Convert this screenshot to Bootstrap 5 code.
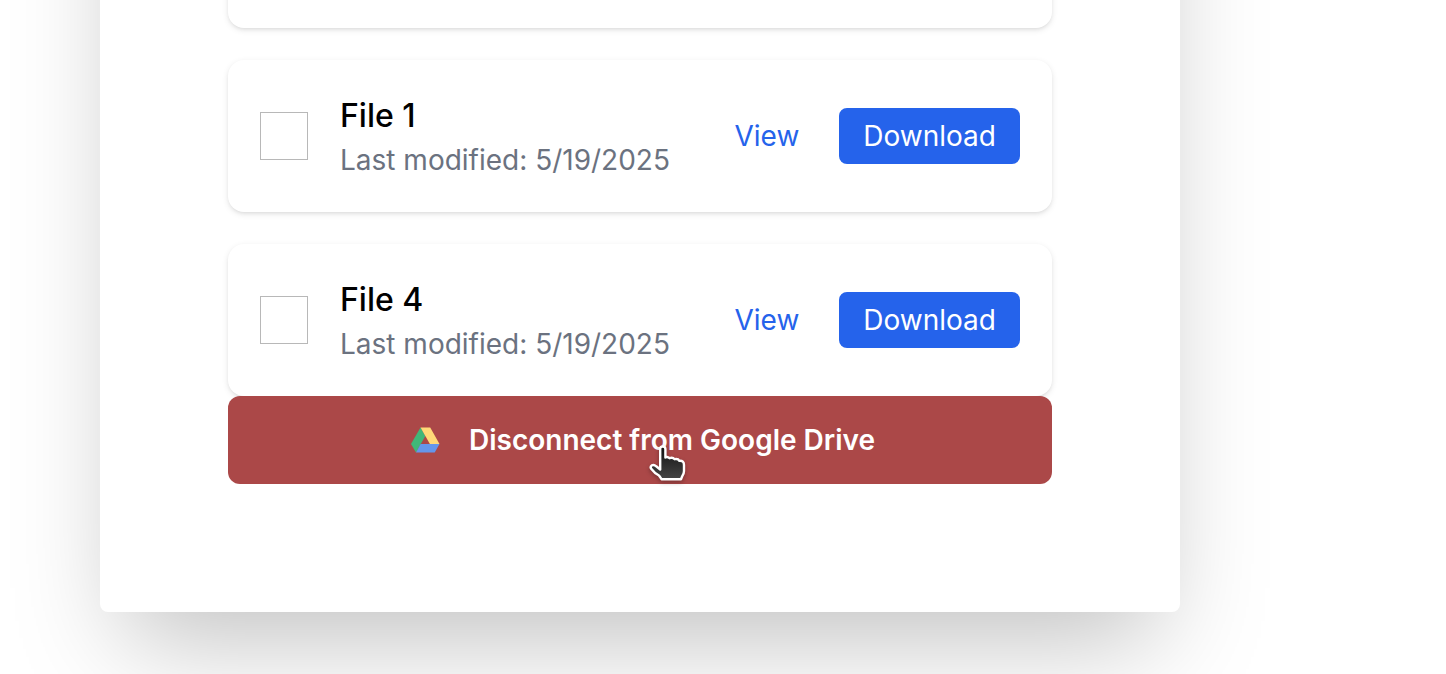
<!DOCTYPE html>
<html lang="en">
<head>
<meta charset="utf-8">
<meta name="viewport" content="width=device-width, initial-scale=1">
<title>Google Drive files</title>
<link href="https://cdn.jsdelivr.net/npm/bootstrap@5.3.0/dist/css/bootstrap.min.css" rel="stylesheet">
<style>
  body { font-family: Inter, "Liberation Sans", sans-serif; background: #fff; color: #000; }
  .page-wrap { padding: 0 100px 62px; }
  /* The panel starts above the viewport, as when scrolled to its end. */
  .panel { max-width: 1080px; margin-top: -252px; padding: 128px; background: #fff; border-radius: 8px; box-shadow: 0 50px 100px -24px rgba(0,0,0,.25); }
  .file-list { gap: 32px; }
  .file-card { min-height: 152px; padding: 32px; gap: 32px; background: #fff; border-radius: 16px; box-shadow: 0 2px 6px rgba(0,0,0,.1), 0 2px 4px -2px rgba(0,0,0,.1); }
  .file-check { appearance: none; width: 48px; height: 48px; border: 1px solid #b8b8b8; background: #fff; }
  .file-name { font-size: 32px; line-height: 48px; font-weight: 500; }
  .file-date { font-size: 28px; line-height: 40px; color: #6b7280; }
  .file-actions { gap: 16px; }
  .file-actions .btn { font-size: 28px; line-height: 40px; padding: 8px 24px; border: 0; border-radius: 8px; }
  .btn-view { color: #2563eb; }
  .btn-download, .btn-download:hover { color: #fff; background: #2563eb; }
  .btn-drive { height: 88px; gap: 24px; border: 0; border-radius: 12px; background: #ab4848; color: #fff; font-size: 28px; line-height: 40px; font-weight: 600; }
  .pointer { top: 48px; left: 50%; margin-left: 8px; filter: drop-shadow(0 2px 2px rgba(0,0,0,.3)); pointer-events: none; }
</style>
</head>
<body>
<div class="page-wrap">
  <main class="panel">
    <div class="file-list d-flex flex-column">
      <div class="file-card"></div>
      <div class="file-card d-flex align-items-center">
        <input class="file-check flex-shrink-0" type="checkbox" id="file1">
        <label class="flex-grow-1" for="file1">
          <span class="file-name d-block">File 1</span>
          <span class="file-date d-block">Last modified: 5/19/2025</span>
        </label>
        <div class="file-actions d-flex">
          <a class="btn btn-view" href="#">View</a>
          <button class="btn btn-download" type="button">Download</button>
        </div>
      </div>
      <div class="file-card d-flex align-items-center">
        <input class="file-check flex-shrink-0" type="checkbox" id="file4">
        <label class="flex-grow-1" for="file4">
          <span class="file-name d-block">File 4</span>
          <span class="file-date d-block">Last modified: 5/19/2025</span>
        </label>
        <div class="file-actions d-flex">
          <a class="btn btn-view" href="#">View</a>
          <button class="btn btn-download" type="button">Download</button>
        </div>
      </div>
    </div>
    <button class="btn-drive position-relative d-flex align-items-center justify-content-center w-100" type="button">
      <svg width="40" height="40" viewBox="0 0 40 40" aria-hidden="true">
        <path fill="#40b778" d="M15.5 7.5 6 24l5 8.500L20.300 16z"/>
        <path fill="#ffd978" d="M15.500 7.500h9.700L34.500 24h-9.600z"/>
        <path fill="#6496eb" d="M15.600 24h18.900l-4.800 8.500H11z"/>
      </svg>
      <span>Disconnect from Google Drive</span>
      <svg class="pointer position-absolute" width="40" height="40" viewBox="0 0 40 40" aria-hidden="true">
        <defs><linearGradient id="hand" x1="0" y1="0" x2="0" y2="1"><stop offset="0" stop-color="#111"/><stop offset="1" stop-color="#454545"/></linearGradient></defs>
        <path fill="url(#hand)" stroke="#fff" stroke-width="2.400" stroke-linejoin="round" d="M12.200 5Q12.200 2.500 14.700 2.500T17.400 5V13.500Q19.500 12.300 21.500 14.200Q24.700 13 26.600 15.200Q30 14.300 31.400 16.800Q36 16.400 36 21V27Q36 30 34.200 32.200L33 35.200H13.500L11 31.500Q6.500 29.200 3 24.500Q2 22.800 3.800 21.400Q6 20.300 8.200 22.300L12.200 25.500z"/>
      </svg>
    </button>
  </main>
</div>
<script src="https://cdn.jsdelivr.net/npm/bootstrap@5.3.0/dist/js/bootstrap.bundle.min.js"></script>
</body>
</html>
